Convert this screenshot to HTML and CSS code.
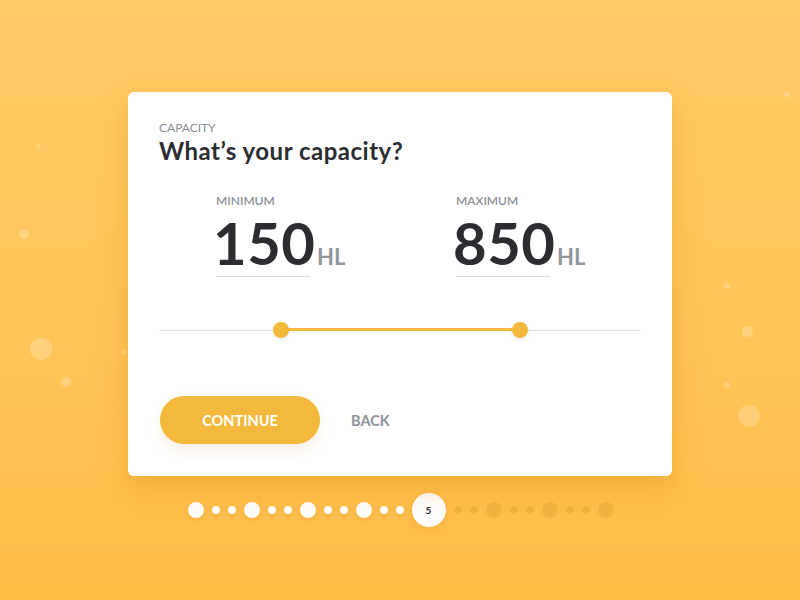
FILE: index.html
```html
<!DOCTYPE html>
<html lang="en">
<head>
	<meta charset="UTF-8">
	<title>Capacity</title>
	<link rel="stylesheet" href="styles.css">
</head>
<body>
	<div class="page">
		<span class="bubble" style="left:36px; top:143px; width:5px; height:5px"></span>
		<span class="bubble" style="left:19px; top:229px; width:10px; height:10px"></span>
		<span class="bubble" style="left:30px; top:338px; width:22px; height:22px"></span>
		<span class="bubble" style="left:61px; top:377px; width:10px; height:10px"></span>
		<span class="bubble" style="left:122px; top:350px; width:5px; height:5px"></span>
		<span class="bubble" style="left:784px; top:91px; width:6px; height:6px"></span>
		<span class="bubble" style="left:724px; top:283px; width:6px; height:6px"></span>
		<span class="bubble" style="left:742px; top:326px; width:11px; height:11px"></span>
		<span class="bubble" style="left:724px; top:382px; width:6px; height:6px"></span>
		<span class="bubble" style="left:738px; top:405px; width:22px; height:22px"></span>

		<div class="card">
			<div class="eyebrow">CAPACITY</div>
			<h1 class="title">What’s your capacity?</h1>

			<div class="range">
				<div class="field">
					<div class="label">MINIMUM</div>
					<div class="amount">
						<span class="value">150</span>
						<span class="unit">HL</span>
					</div>
				</div>
				<div class="field">
					<div class="label">MAXIMUM</div>
					<div class="amount">
						<span class="value">850</span>
						<span class="unit">HL</span>
					</div>
				</div>
			</div>

			<div class="slider">
				<div class="track"></div>
				<div class="fill" style="left:122px; width:239px"></div>
				<span class="thumb" style="left:114px"></span>
				<span class="thumb" style="left:353px"></span>
			</div>

			<div class="actions">
				<button class="btn-primary">CONTINUE</button>
				<button class="btn-link">BACK</button>
			</div>
		</div>

		<div class="steps">
			<span class="dot big"></span>
			<span class="dot"></span>
			<span class="dot"></span>
			<span class="dot big"></span>
			<span class="dot"></span>
			<span class="dot"></span>
			<span class="dot big"></span>
			<span class="dot"></span>
			<span class="dot"></span>
			<span class="dot big"></span>
			<span class="dot"></span>
			<span class="dot"></span>
			<span class="current">5</span>
			<span class="dot off"></span>
			<span class="dot off"></span>
			<span class="dot big off"></span>
			<span class="dot off"></span>
			<span class="dot off"></span>
			<span class="dot big off"></span>
			<span class="dot off"></span>
			<span class="dot off"></span>
			<span class="dot big off"></span>
		</div>
	</div>
</body>
</html>
```

FILE: styles.css
```css
* {
	box-sizing: border-box;
}

body {
	margin: 0;
	font-family: Lato, "Open Sans", sans-serif;
	background: linear-gradient(180deg, #ffcb67 0%, #ffc457 60%, #ffbd47 100%);
	height: 600px;
	overflow: hidden;
}

.page {
	position: relative;
	height: 600px;
	display: flex;
	flex-direction: column;
	align-items: center;
	padding-top: 92px;
}

.bubble {
	position: absolute;
	border-radius: 50%;
	background: rgba(255, 255, 255, 0.22);
}

.card {
	position: relative;
	width: 544px;
	background: #fff;
	border-radius: 6px;
	padding: 28px 31px 32px;
	box-shadow: 0 12px 30px rgba(222, 140, 20, 0.38);
}

.eyebrow {
	font-size: 12px;
	line-height: 16px;
	color: #8b9096;
}

.title {
	margin: 1px 0 0;
	font-size: 24px;
	line-height: 28px;
	font-weight: 700;
	letter-spacing: 0.5px;
	color: #2b2d31;
}

.range {
	display: flex;
	margin-top: 28px;
	padding-left: 57px;
}

.field {
	flex: 0 0 240px;
}

.label {
	font-size: 12px;
	line-height: 16px;
	font-weight: 600;
	color: #8b9096;
}

.amount {
	display: flex;
	align-items: baseline;
	margin-top: 4px;
}

.value {
	display: inline-block;
	width: 94px;
	font-size: 58px;
	line-height: 60px;
	font-weight: 700;
	letter-spacing: 0.5px;
	color: #2b2d31;
	white-space: nowrap;
	text-indent: -3px;
	padding-bottom: 3px;
	border-bottom: 1px solid #dde1e5;
}

.unit {
	margin-left: 7px;
	font-size: 22px;
	font-weight: 700;
	color: #8f959b;
}

.slider {
	position: relative;
	height: 16px;
	margin-top: 45px;
}

.track {
	position: absolute;
	left: 0;
	right: 0;
	top: 8px;
	height: 1px;
	background: #dde2e2;
}

.fill {
	position: absolute;
	top: 6px;
	height: 3px;
	background: #f3b93c;
}

.thumb {
	position: absolute;
	top: 0;
	width: 16px;
	height: 16px;
	border-radius: 50%;
	background: #f3b93c;
	box-shadow: 0 2px 5px rgba(0, 0, 0, 0.08);
}

.actions {
	display: flex;
	align-items: center;
	margin-top: 58px;
	padding-left: 1px;
}

.btn-primary {
	width: 160px;
	height: 48px;
	border: none;
	border-radius: 24px;
	background: #f3b93c;
	color: #fff;
	font-family: inherit;
	font-size: 14.5px;
	font-weight: 700;
	box-shadow: 0 6px 14px rgba(180, 120, 20, 0.12);
}

.btn-link {
	margin-left: 31px;
	padding: 0;
	border: none;
	background: none;
	color: #8e9399;
	font-family: inherit;
	font-size: 14.5px;
	font-weight: 700;
}

.steps {
	display: flex;
	align-items: center;
	gap: 8px;
	margin-top: 17px;
	margin-left: 1px;
}

.dot {
	width: 8px;
	height: 8px;
	border-radius: 50%;
	background: #fff;
	box-shadow: 0 2px 4px rgba(200, 120, 10, 0.15);
}

.dot.big {
	width: 16px;
	height: 16px;
}

.dot.off {
	background: rgba(190, 125, 20, 0.18);
	box-shadow: none;
}

.current {
	width: 34px;
	height: 34px;
	border-radius: 50%;
	background: #fff;
	display: flex;
	align-items: center;
	justify-content: center;
	font-size: 10px;
	font-weight: 700;
	color: #2b2d31;
	box-shadow: 0 3px 8px rgba(200, 120, 10, 0.2);
}
```
